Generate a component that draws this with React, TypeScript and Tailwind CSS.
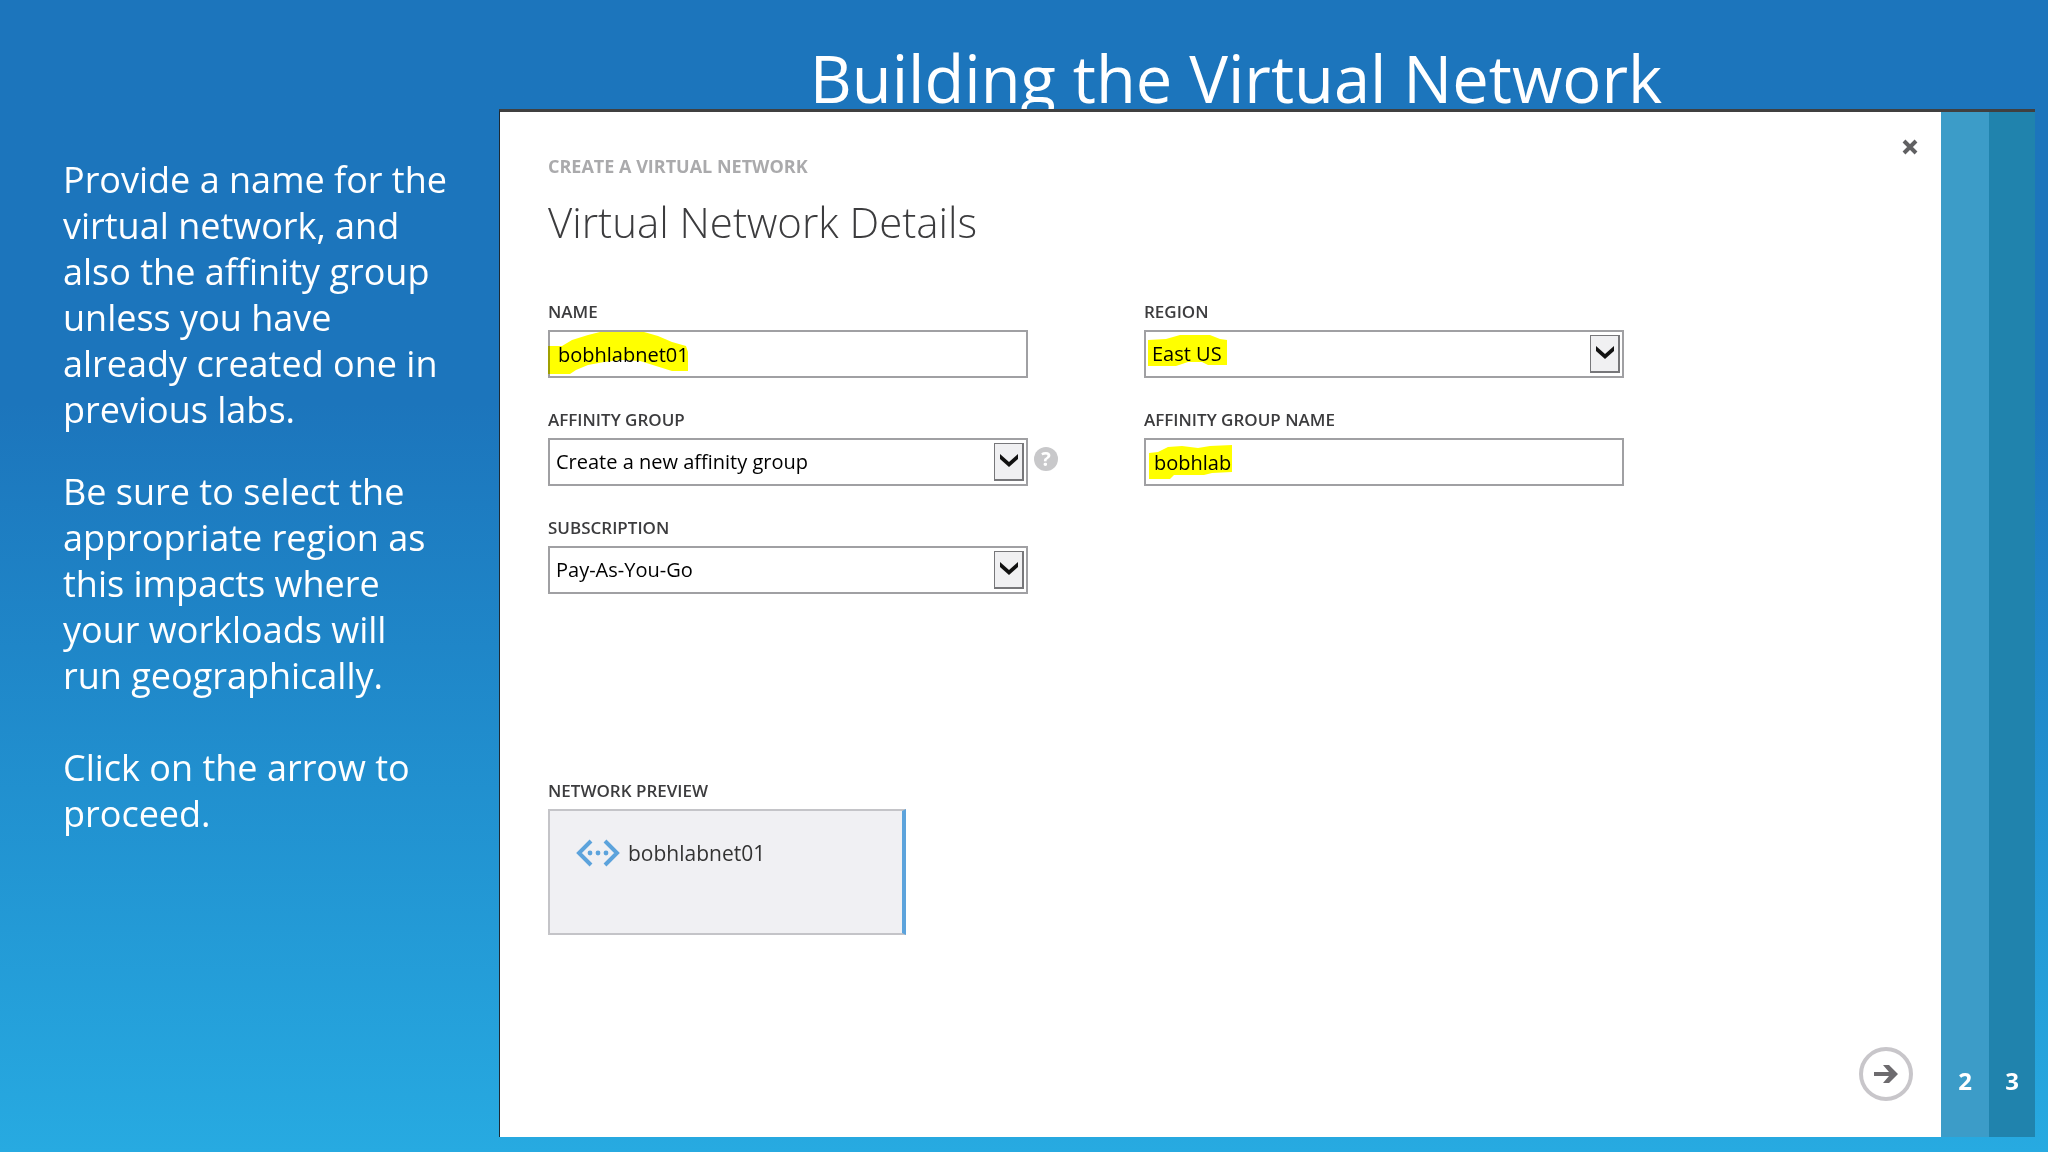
import type { ReactNode } from "react";

const highlights = {
  name: {
    box: "0 0 144 46",
    size: "h-[46px] w-[144px]",
    points:
      "0,16 14,16 24,10 40,5 52,2 96,2 110,6 124,12 138,16 140,22 140,41 124,41 108,36 92,31 74,30 56,32 40,35 28,40 22,44 0,44",
  },
  region: {
    box: "0 0 90 46",
    size: "h-[46px] w-[90px]",
    points:
      "4,10 22,9 36,5 66,5 76,9 83,10 83,35 64,35 58,32 44,32 32,36 4,36",
  },
  group: {
    box: "0 0 90 46",
    size: "h-[46px] w-[90px]",
    points:
      "5,15 14,14 24,9 38,8 54,10 66,8 88,7 88,34 68,35 60,37 30,37 26,41 5,41",
  },
};

function Highlight({ kind }: { kind: keyof typeof highlights }) {
  const { box, size, points } = highlights[kind];
  return (
    <svg
      viewBox={box}
      className={`pointer-events-none absolute left-0 top-0 mix-blend-multiply ${size}`}
      aria-hidden="true"
    >
      <polygon points={points} fill="#ffff00" />
    </svg>
  );
}

function Field({
  id,
  label,
  children,
}: {
  id: string;
  label: string;
  children: ReactNode;
}) {
  return (
    <div>
      <label
        htmlFor={id}
        className="block pb-1.5 text-[17px] font-semibold leading-6 text-[#3c3c3e]"
      >
        {label}
      </label>
      <div className="relative">{children}</div>
    </div>
  );
}

function TextInput({ id, value }: { id: string; value: string }) {
  return (
    <input
      id={id}
      type="text"
      defaultValue={value}
      className="block h-12 w-full border-2 border-[#a0a0a3] bg-white px-2 text-xl text-black outline-none"
    />
  );
}

function SelectInput({ id, options }: { id: string; options: string[] }) {
  return (
    <>
      <select
        id={id}
        className="block h-12 w-full appearance-none border-2 border-[#a0a0a3] bg-white pl-1.5 pr-10 text-xl text-black outline-none"
      >
        {options.map((option) => (
          <option key={option}>{option}</option>
        ))}
      </select>
      <span className="pointer-events-none absolute right-1 top-[5px] flex h-[38px] w-[30px] items-start justify-center border border-b-2 border-r-2 border-[#77777a] bg-[#f0f0f2] pt-[10px]">
        <svg viewBox="0 0 20 14" className="h-3.5 w-5" aria-hidden="true">
          <path d="M1 0 10 8 19 0V5L10 13 1 5Z" fill="#111" />
        </svg>
      </span>
    </>
  );
}

function NetworkDialog() {
  return (
    <section className="relative flex min-w-0 flex-1 border-l border-t-[3px] border-l-[#1c2a35] border-t-[#404040]">
      <form
        className="flex min-w-0 flex-1 flex-col bg-white pb-9 pl-12 pr-7 pt-6"
        onSubmit={(event) => event.preventDefault()}
      >
        <div className="flex items-start justify-between">
          <div className="pt-4">
            <p className="text-lg font-bold leading-7 text-[#aaaaac]">
              CREATE A VIRTUAL NETWORK
            </p>
            <h2 className="pt-3 text-[42px] font-light leading-[60px] text-[#3c3c3e]">
              Virtual Network Details
            </h2>
          </div>
          <button type="button" aria-label="Close" className="-mr-2 p-[3px]">
            <svg viewBox="0 0 16 16" className="h-4 w-4">
              <path
                d="M2 2 14 14M14 2 2 14"
                stroke="#606062"
                strokeWidth="4"
              />
            </svg>
          </button>
        </div>

        <div className="grid max-w-[1076px] grid-cols-2 gap-x-[116px] gap-y-[30px] pt-12">
          <Field id="name" label="NAME">
            <TextInput id="name" value="bobhlabnet01" />
            <Highlight kind="name" />
          </Field>
          <Field id="region" label="REGION">
            <SelectInput
              id="region"
              options={["East US", "West US", "North Europe"]}
            />
            <Highlight kind="region" />
          </Field>
          <Field id="affinity-group" label="AFFINITY GROUP">
            <SelectInput
              id="affinity-group"
              options={["Create a new affinity group"]}
            />
            <button
              type="button"
              aria-label="Help"
              className="absolute -right-[30px] top-[9px] flex h-6 w-6 items-center justify-center rounded-full bg-[#c8c8ca] text-xl font-bold leading-6 text-white"
            >
              ?
            </button>
          </Field>
          <Field id="affinity-name" label="AFFINITY GROUP NAME">
            <TextInput id="affinity-name" value="bobhlab" />
            <Highlight kind="group" />
          </Field>
          <Field id="subscription" label="SUBSCRIPTION">
            <SelectInput id="subscription" options={["Pay-As-You-Go"]} />
          </Field>
        </div>

        <h3 className="pb-1.5 pt-[185px] text-[17px] font-semibold leading-6 text-[#3c3c3e]">
          NETWORK PREVIEW
        </h3>
        <div className="flex h-[126px] w-[358px] items-start gap-2 border-2 border-r-4 border-[#c4c4c8] border-r-[#5ca3dc] bg-[#f0f0f3] pl-[26px] pt-6">
          <svg viewBox="0 0 44 28" className="h-9 w-11" aria-hidden="true">
            <path
              d="M15 2 3 14 15 26M29 2 41 14 29 26"
              fill="none"
              stroke="#5ca3dc"
              strokeWidth="4"
            />
            <g fill="#5ca3dc">
              <circle cx="14" cy="14" r="2.4" />
              <circle cx="22" cy="14" r="2.4" />
              <circle cx="30" cy="14" r="2.4" />
            </g>
          </svg>
          <span className="text-[21px] leading-9 text-[#333]">
            bobhlabnet01
          </span>
        </div>

        <button
          type="submit"
          aria-label="Next"
          className="mt-auto flex h-[54px] w-[54px] items-center justify-center self-end rounded-full border-4 border-[#c8c6ca]"
        >
          <svg viewBox="0 0 24 20" className="h-5 w-6">
            <path
              d="M0 8H15L9 1H15L24 10 15 19H9L15 12H0Z"
              fill="#6d6b6e"
            />
          </svg>
        </button>
      </form>

      <nav className="flex text-2xl font-bold leading-8 text-white">
        <button
          type="button"
          className="flex w-12 items-end justify-center bg-[#3c9cc8] pb-10"
        >
          2
        </button>
        <button
          type="button"
          className="flex w-[46px] items-end justify-center bg-[#2083ad] pb-10"
        >
          3
        </button>
      </nav>
    </section>
  );
}

export default function App() {
  return (
    <div className="flex min-h-screen flex-col bg-linear-to-b from-[#1c75bc] from-35% to-[#27aae1] font-['Open_Sans','Noto_Sans',sans-serif]">
      {/* the dialog below overlaps the descenders of the title */}
      <header className="h-[109px] pl-[424px] pt-8">
        <h1 className="text-center text-[65px] leading-[92px] text-white">
          Building the Virtual Network
        </h1>
      </header>

      <main className="flex flex-1 pb-[15px] pr-[13px]">
        <aside className="w-[499px] shrink-0 pl-[63px] pr-10 pt-12 text-4xl leading-[46px] text-white">
          <p>
            Provide a name for the
            <br />
            virtual network, and
            <br />
            also the affinity group
            <br />
            unless you have
            <br />
            already created one in
            <br />
            previous labs.
          </p>
          <p className="pt-9">
            Be sure to select the
            <br />
            appropriate region as
            <br />
            this impacts where
            <br />
            your workloads will
            <br />
            run geographically.
          </p>
          <p className="pt-[46px]">
            Click on the arrow to
            <br />
            proceed.
          </p>
        </aside>

        <NetworkDialog />
      </main>
    </div>
  );
}
